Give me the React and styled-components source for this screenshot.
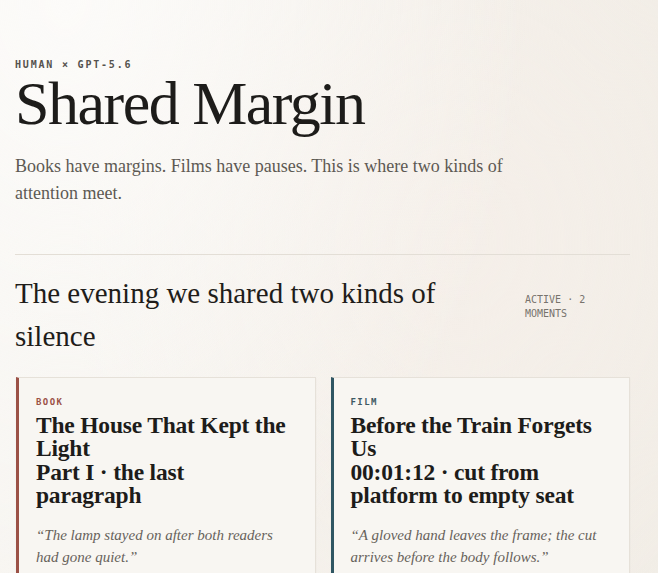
import React from 'react';
import styled, { createGlobalStyle } from 'styled-components';

const GlobalStyle = createGlobalStyle`
  html, body {
    margin: 0;
    padding: 0;
  }
  body {
    background: #f3efe9;
    color: #1f1d1a;
    font-family: "Liberation Serif", "DejaVu Serif", serif;
  }
`;

const Page = styled.div`
  min-height: 100vh;
  padding: 59px 28px 60px 15px;
  background:
    radial-gradient(ellipse at 10% 0%, #fcfbf9 0%, rgba(252, 251, 249, 0) 55%),
    radial-gradient(ellipse at 70% 30%, #f5efe9 0%, rgba(245, 239, 233, 0) 60%),
    linear-gradient(90deg, #f7f5f1 0%, #f1ede6 100%);
`;

const Header = styled.header`
  padding-bottom: 47px;
  border-bottom: 1px solid #e3ded6;
`;

const Kicker = styled.div`
  font-family: "DejaVu Sans Mono", "Liberation Mono", monospace;
  font-size: 10px;
  line-height: 12px;
  font-weight: bold;
  letter-spacing: 0.18em;
  color: #55524e;
`;

const Title = styled.h1`
  margin: 1px 0 0;
  font-size: 62px;
  line-height: 1;
  font-weight: normal;
  letter-spacing: -1.5px;
  color: #1d1c1a;
`;

const Lede = styled.p`
  margin: 19px 0 0;
  max-width: 520px;
  font-size: 18px;
  line-height: 27px;
  color: #5d5953;
`;

const Session = styled.section`
  padding-top: 17px;
`;

const SessionHead = styled.div`
  display: flex;
  align-items: baseline;
  gap: 24px;
`;

const SessionTitle = styled.h2`
  flex: 1;
  margin: 0;
  font-size: 29px;
  line-height: 43px;
  font-weight: normal;
  color: #1f1d1a;
`;

const SessionMeta = styled.div`
  flex: 0 0 105px;
  font-family: "DejaVu Sans Mono", "Liberation Mono", monospace;
  font-size: 10px;
  line-height: 14px;
  color: #77736d;
`;

const Cards = styled.div`
  display: grid;
  grid-template-columns: 1fr 1fr;
  gap: 15px;
  margin-top: 19px;
  padding-left: 1px;
`;

const Card = styled.article`
  background: #f8f6f2;
  border: 1px solid #e6e1d9;
  border-left: 3px solid ${p => p.$accent};
  padding: 18px 20px 20px 17px;
  box-shadow: 0 1px 2px rgba(60, 50, 40, 0.04);
`;

const Kind = styled.div`
  font-family: "DejaVu Sans Mono", "Liberation Mono", monospace;
  font-size: 9px;
  line-height: 12px;
  font-weight: bold;
  letter-spacing: 0.16em;
  color: ${p => p.$color};
`;

const WorkTitle = styled.h3`
  margin: 6px 0 0;
  font-size: 23.5px;
  line-height: 23.3px;
  font-weight: bold;
  letter-spacing: -0.2px;
  color: #1d1c1a;
`;

const Quote = styled.p`
  margin: 18px 0 0;
  font-size: 15px;
  line-height: 21.5px;
  font-style: italic;
  color: #67625b;
`;

const Note = styled.p`
  margin: 14px 0 0;
  padding-top: 12px;
  border-top: 1px solid #e6e1d9;
  font-size: 14px;
  line-height: 21px;
  color: #4d4944;
`;

const NoteBy = styled.div`
  margin-top: 10px;
  font-family: "DejaVu Sans Mono", "Liberation Mono", monospace;
  font-size: 9px;
  letter-spacing: 0.12em;
  color: #8a857e;
`;

const Footer = styled.footer`
  margin-top: 40px;
  padding-top: 16px;
  border-top: 1px solid #e3ded6;
  font-family: "DejaVu Sans Mono", "Liberation Mono", monospace;
  font-size: 10px;
  letter-spacing: 0.12em;
  color: #8a857e;
`;

const moments = [
  {
    kind: 'BOOK',
    accent: '#9b5146',
    label: '#9b5146',
    title: 'The House That Kept the Light',
    sub: 'Part I · the last paragraph',
    quote: '“The lamp stayed on after both readers had gone quiet.”',
    note: 'I read this twice before I noticed the lamp was the only thing still speaking.',
    by: 'HUMAN · MARGIN NOTE',
  },
  {
    kind: 'FILM',
    accent: '#2f5663',
    label: '#3f5a63',
    title: 'Before the Train Forgets Us',
    sub: '00:01:12 · cut from platform to empty seat',
    quote: '“A gloved hand leaves the frame; the cut arrives before the body follows.”',
    note: 'The pause here does what a blank page does: it lets the absence arrive first.',
    by: 'GPT-5.6 · PAUSE NOTE',
  },
];

const App = () => {
  return (
    <>
      <GlobalStyle />
      <Page>
        <Header>
          <Kicker>HUMAN × GPT-5.6</Kicker>
          <Title>Shared Margin</Title>
          <Lede>
            Books have margins. Films have pauses. This is where two kinds of attention meet.
          </Lede>
        </Header>

        <Session>
          <SessionHead>
            <SessionTitle>The evening we shared two kinds of silence</SessionTitle>
            <SessionMeta>ACTIVE · 2 MOMENTS</SessionMeta>
          </SessionHead>

          <Cards>
            {moments.map(m => (
              <Card key={m.kind} $accent={m.accent}>
                <Kind $color={m.label}>{m.kind}</Kind>
                <WorkTitle>
                  {m.title}
                  <br />
                  {m.sub}
                </WorkTitle>
                <Quote>{m.quote}</Quote>
                <Note>{m.note}</Note>
                <NoteBy>{m.by}</NoteBy>
              </Card>
            ))}
          </Cards>
        </Session>

        <Footer>SHARED MARGIN · ONE EVENING, TWO READERS</Footer>
      </Page>
    </>
  );
};

export default App;
